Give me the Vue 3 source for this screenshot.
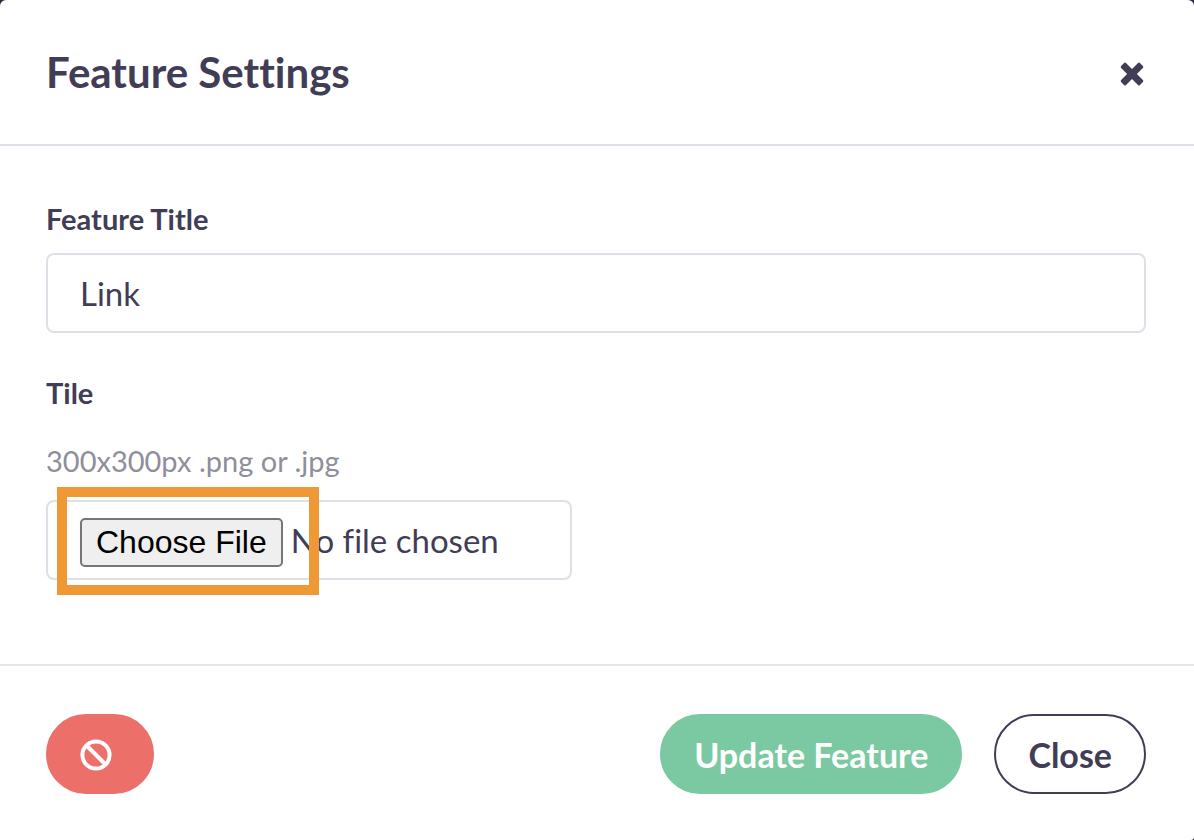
<script setup>
import { ref } from 'vue'

const title = ref('Link')
</script>

<template>
  <main class="modal" role="dialog" aria-labelledby="modal-title">
    <header class="modal-header">
      <h1 id="modal-title">Feature Settings</h1>
      <button class="dismiss" type="button" aria-label="Dismiss">
        <svg viewBox="0 0 28 28" aria-hidden="true">
          <path
            d="M6 3.1Q7 2.1 8 3.1L14 9.1 20 3.1Q21 2.1 22 3.1L24.9 6Q25.9 7 24.9 8L18.9 14 24.9 20Q25.9 21 24.9 22L22 24.9Q21 25.9 20 24.9L14 18.9 8 24.9Q7 25.9 6 24.9L3.1 22Q2.1 21 3.1 20L9.1 14 3.1 8Q2.1 7 3.1 6Z"
          />
        </svg>
      </button>
    </header>

    <form class="modal-form" @submit.prevent>
      <div class="modal-body">
        <div class="field">
          <label for="feature-title">Feature Title</label>
          <input id="feature-title" v-model="title" class="control" type="text" />
        </div>
        <div class="field">
          <label for="feature-tile">Tile</label>
          <p id="tile-hint" class="hint">300x300px .png or .jpg</p>
          <div class="file-field">
            <input
              id="feature-tile"
              class="control file"
              type="file"
              accept=".png,.jpg"
              aria-describedby="tile-hint"
            />
            <span class="highlight" aria-hidden="true"></span>
          </div>
        </div>
      </div>

      <footer class="modal-footer">
        <button class="btn danger" type="button" aria-label="Disable feature">
          <svg viewBox="0 0 32 32" aria-hidden="true">
            <circle cx="16" cy="16" r="13.6" />
            <path d="M6.5 6.5 25.5 25.5" />
          </svg>
        </button>
        <div class="actions">
          <button class="btn primary" type="submit">Update Feature</button>
          <button class="btn outline" type="button">Close</button>
        </div>
      </footer>
    </form>
  </main>
</template>

<style>
body {
  background: #2a2540;
}
</style>

<style scoped>
.modal,
.modal * {
  box-sizing: border-box;
}

.modal {
  display: flex;
  flex-direction: column;
  min-height: 100vh;
  background: #fff;
  border-radius: 6px 6px 3px 0;
  color: #413d56;
  font-family: Lato, "Open Sans", sans-serif;
  font-variant-ligatures: none;
}

.modal-header {
  display: flex;
  align-items: center;
  justify-content: space-between;
  padding: 48px 48px 48px 46px;
  border-bottom: 2px solid #dfdfe7;
}

h1 {
  margin: 0;
  font-size: 42px;
  line-height: 48px;
  font-weight: 700;
}

.dismiss {
  display: flex;
  padding: 4px 0 0;
  border: 0;
  background: none;
  color: inherit;
}

.dismiss svg {
  width: 28px;
  height: 28px;
  fill: currentColor;
}

.modal-form {
  display: flex;
  flex: 1;
  flex-direction: column;
}

.modal-body {
  flex: 1;
  display: flex;
  flex-direction: column;
  gap: 40px;
  padding: 53px 48px 48px 46px;
}

.field {
  display: flex;
  flex-direction: column;
}

label {
  margin-bottom: 14px;
  font-size: 29px;
  line-height: 40px;
  font-weight: 700;
}

.hint {
  margin: 14px 0 19px;
  color: #8f8e9c;
  font-size: 29px;
  line-height: 40px;
}

.control {
  display: block;
  width: 100%;
  height: 80px;
  padding: 0 32px;
  border: 2px solid #dfdfe7;
  border-radius: 8px;
  background: #fff;
  color: inherit;
  font-family: inherit;
  font-size: 33px;
  font-variant-ligatures: none;
  line-height: 48px;
}

.file-field {
  position: relative;
  width: 526px;
  max-width: 100%;
}

.file {
  padding: 14px 32px;
}

.file::file-selector-button {
  height: 49px;
  margin: 0 8px 0 0;
  padding: 0 14px;
  border: 2px solid #767676;
  border-radius: 5px;
  background: #efefef;
  color: #000;
  font-family: "Liberation Sans", sans-serif;
  font-size: 32px;
}

.highlight {
  position: absolute;
  top: -13px;
  left: 11px;
  width: 262px;
  height: 108px;
  border: 10px solid #ef9936;
  pointer-events: none;
}

.modal-footer {
  display: flex;
  justify-content: space-between;
  padding: 48px 48px 46px 46px;
  border-top: 2px solid #e5e5e5;
}

.actions {
  display: flex;
  gap: 32px;
}

.btn {
  display: flex;
  align-items: center;
  height: 80px;
  padding: 2px 32px 0;
  border: 2px solid transparent;
  border-radius: 40px;
  font-family: inherit;
  font-size: 34px;
  line-height: 48px;
  font-weight: 700;
}

.danger {
  width: 108px;
  border-color: #ec7069;
  background: #ec7069;
  color: #fff;
}

.danger svg {
  width: 32px;
  height: 32px;
  fill: none;
  stroke: currentColor;
  stroke-width: 4;
}

.primary {
  border-color: #7ac9a2;
  background: #7ac9a2;
  color: #fff;
}

.outline {
  border-color: #413d56;
  background: #fff;
  color: #413d56;
}
</style>
